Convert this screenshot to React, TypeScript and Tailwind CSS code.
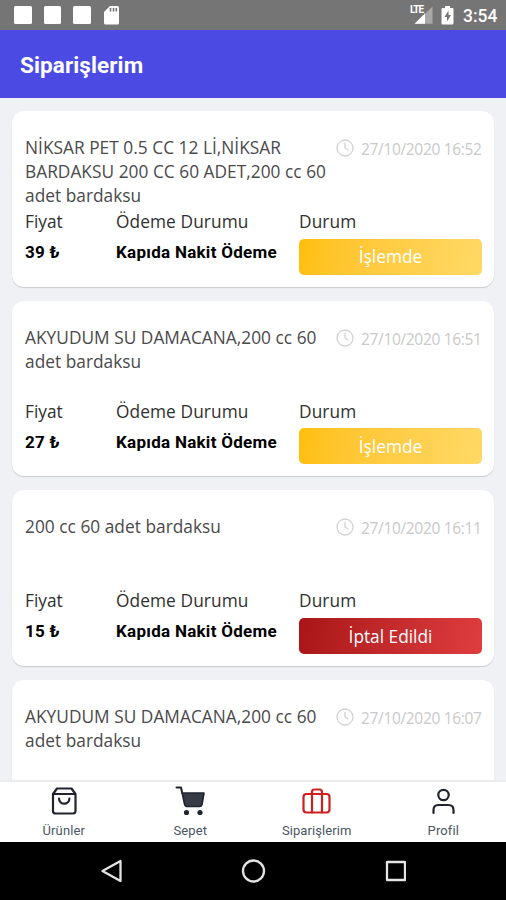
import React from "react";

type Order = { title: string[]; date: string; price: string; status: string; cancelled?: boolean };

const orders: Order[] = [
  { title: ["NİKSAR PET 0.5 CC 12 Lİ,NİKSAR", "BARDAKSU 200 CC 60 ADET,200 cc 60", "adet bardaksu"], date: "27/10/2020 16:52", price: "39 ₺", status: "İşlemde" },
  { title: ["AKYUDUM SU DAMACANA,200 cc 60", "adet bardaksu"], date: "27/10/2020 16:51", price: "27 ₺", status: "İşlemde" },
  { title: ["200 cc 60 adet bardaksu"], date: "27/10/2020 16:11", price: "15 ₺", status: "İptal Edildi", cancelled: true },
  { title: ["AKYUDUM SU DAMACANA,200 cc 60", "adet bardaksu"], date: "27/10/2020 16:07", price: "27 ₺", status: "İşlemde" },
];

function StatusBar() {
  return (
    <div className="flex h-[30px] shrink-0 items-center bg-[#757575] pl-[14px] pr-[9px]">
      <div className="flex items-center gap-[12px]">
        <div className="size-[17.5px] rounded-[1.5px] bg-white" />
        <div className="size-[17.5px] rounded-[1.5px] bg-white" />
        <div className="size-[17.5px] rounded-[1.5px] bg-white" />
        <svg width="16" height="20" viewBox="0 0 16 20" className="ml-px">
          <path d="M6 1h7.5Q15 1 15 2.500V18q0 1.500-1.500 1.500h-12Q0 19.500 0 18V7z" fill="#fff" />
          <path d="M6.500 3v3.500M9.500 3v3.500M12.300 3v3.500" stroke="#757575" strokeWidth="1.600" />
        </svg>
      </div>
      <div className="ml-auto flex items-center">
        <div className="relative h-[20px] w-[24px]">
          <svg width="24" height="20" viewBox="0 0 24 20" className="block">
            <path d="M5 18.700 22.500 1.500v17.200z" fill="#a8a8a8" />
            <path d="M4.500 18.700 15 8.300v10.400z" fill="#fff" />
          </svg>
          <span className="absolute left-0 top-0 bg-[#757575] pr-px font-['Roboto',sans-serif] text-[10px] font-bold leading-[10px] tracking-[-1px] text-white">LTE</span>
        </div>
        <svg width="13" height="20" viewBox="0 0 13 20" className="ml-[7px]">
          <path d="M4 1h5v2h2.500Q12.500 3 12.500 4v14.500q0 1-1 1h-10q-1 0-1-1V4q0-1 1-1H4z" fill="#fff" />
          <path d="M7.500 5.500 3.500 12H6v4.500L10 10H7.500z" fill="#757575" />
        </svg>
        <span className="ml-[9px] mt-[2px] w-[34px] whitespace-nowrap font-['Roboto',sans-serif] text-[17.500px] font-medium leading-5 text-white">3:54</span>
      </div>
    </div>
  );
}

function ClockIcon() {
  return (
    <svg width="18" height="18" viewBox="0 0 18 18" fill="none" stroke="#d2d2d2" strokeWidth="1.300" className="mt-[3px] shrink-0">
      <circle cx="9" cy="9" r="8" />
      <path d="M9 3.800V9l3.500 2.200" />
    </svg>
  );
}

function OrderCard({ order }: { order: Order }) {
  return (
    <article className="h-[175.700px] shrink-0 rounded-[12px] bg-white pl-[13px] pr-[12px] pt-[25px] font-['Open_Sans',sans-serif] shadow-[0_1px_1px_rgba(0,0,0,0.16)]">
      <div className="flex h-[74px] justify-between text-[17.300px] leading-6 tracking-[0.03px] text-[#4a4a4a]">
        <div className="w-[305px] whitespace-nowrap">
          {order.title.map((line) => <p key={line}>{line}</p>)}
        </div>
        <div className="flex shrink-0 gap-[7px]">
          <ClockIcon />
          <time className="w-[121px] whitespace-nowrap pt-px text-[15.500px] tracking-[-0.330px] text-[#c9c9c9]">{order.date}</time>
        </div>
      </div>
      <div className="grid grid-cols-[91px_183px_183px] text-[17.300px] leading-6 text-[#303030]">
        <div>
          <p>Fiyat</p>
          <p className="mt-[6px] whitespace-nowrap font-['Roboto',sans-serif] text-[17px] font-bold tracking-[0.27px] text-black">{order.price}</p>
        </div>
        <div>
          <p className="tracking-[0.1px]">Ödeme Durumu</p>
          <p className="mt-[6px] whitespace-nowrap font-['Roboto',sans-serif] text-[17px] font-bold tracking-[0.27px] text-black">Kapıda Nakit Ödeme</p>
        </div>
        <div>
          <p className="tracking-[0.1px]">Durum</p>
          <div className={order.cancelled
            ? "mt-[4.800px] flex h-[36px] items-center justify-center rounded-[5px] bg-linear-100 from-[#a91517] to-[#df3d3f] pt-px text-white"
            : "mt-[4.800px] flex h-[36px] items-center justify-center rounded-[5px] bg-linear-100 from-[#ffbf06] to-[#ffd965] pt-px text-white"}>
            {order.status}
          </div>
        </div>
      </div>
    </article>
  );
}

function Tab({ label, children }: { label: string; children: React.ReactNode }) {
  return (
    <div className="flex flex-1 flex-col items-center pt-[3px]">
      <svg width="32" height="32" viewBox="0 0 32 32" fill="none" stroke="#20242e" strokeWidth="2.200" strokeLinecap="round" strokeLinejoin="round" className="ml-px shrink-0">{children}</svg>
      <span className="ml-px mt-[6px] whitespace-nowrap font-['Roboto',sans-serif] text-[13px] leading-4 tracking-[0.1px] text-[#4b5563]">{label}</span>
    </div>
  );
}

export default function App() {
  return (
    <div className="flex h-[900px] w-[506px] flex-col overflow-hidden bg-[#f0f1f5]">
      <StatusBar />
      <header className="flex h-[68px] shrink-0 items-center bg-[#4b4be3] pl-[20px] pt-[3px]">
        <h1 className="font-['Roboto',sans-serif] text-[22.500px] font-bold tracking-[0.1px] text-white">Siparişlerim</h1>
      </header>
      <main className="flex min-h-0 flex-1 flex-col gap-[14px] overflow-hidden px-[12px] pt-[13px]">
        {orders.map((order) => <OrderCard key={order.date} order={order} />)}
      </main>
      <nav className="flex h-[62px] shrink-0 border-t-2 border-[#ecedf0] bg-white">
        <Tab label="Ürünler">
          <path d="M9 3.500h14.500L27.500 9v17q0 2.500-2.500 2.500H7.500Q5 28.500 5 26V9zM5 9h22.500M11 13.500a5.200 5.200 0 0 0 10.400 0" />
        </Tab>
        <Tab label="Sepet">
          <path d="M8.200 8H30l-2 11.500q-.500 2-2.500 2h-12q-2.500 0-3-2.500z" fill="#373b45" strokeWidth="1.600" />
          <path d="M2.500 2.500H7L8.200 8" strokeWidth="2" />
          <circle cx="12.500" cy="27.500" r="1.500" fill="#20242e" />
          <circle cx="26" cy="27.500" r="1.500" fill="#20242e" />
        </Tab>
        <Tab label="Siparişlerim">
          <g stroke="#cc2020">
            <rect x="2.500" y="9" width="26" height="18.500" rx="3" />
            <path d="M11 27.500V7q0-2.500 2.500-2.500h5Q21 4.500 21 7v20.500" />
          </g>
        </Tab>
        <Tab label="Profil">
          <circle cx="16.500" cy="10" r="5.200" />
          <path d="M6.500 28v-3q0-5 5-5h10q5 0 5 5v3" />
        </Tab>
      </nav>
      <footer className="flex h-[58px] shrink-0 items-center bg-black pl-[100px]">
        <svg width="306" height="28" viewBox="0 0 306 28" fill="none" stroke="#e4e4e4" strokeWidth="2.300" strokeLinejoin="round">
          <path d="M20.500 4v20L2.500 14z" />
          <circle cx="153.500" cy="14" r="10.500" />
          <rect x="287" y="5" width="18" height="18" />
        </svg>
      </footer>
    </div>
  );
}
